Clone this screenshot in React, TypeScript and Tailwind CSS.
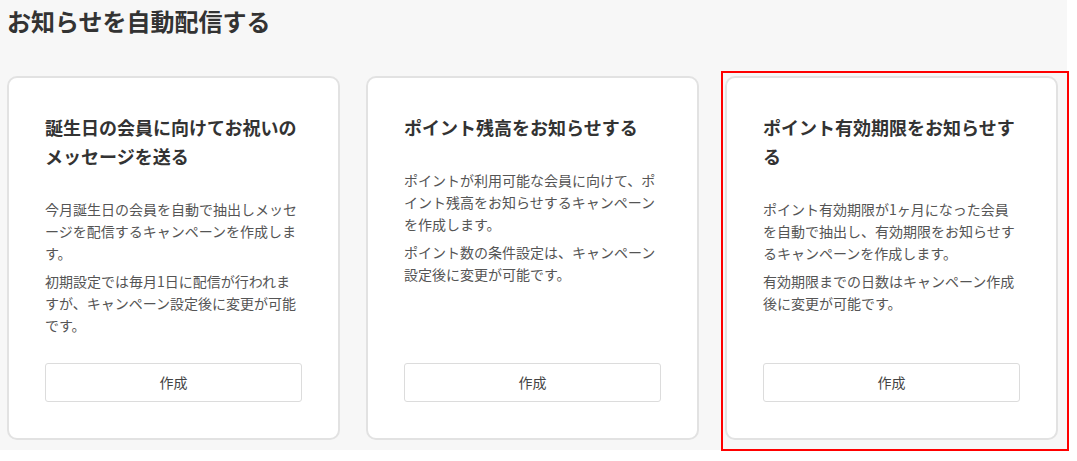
import React from 'react';

interface Campaign {
  title: string;
  paragraphs: string[];
  highlighted?: boolean;
}

const campaigns: Campaign[] = [
  {
    title: '誕生日の会員に向けてお祝いのメッセージを送る',
    paragraphs: [
      '今月誕生日の会員を自動で抽出しメッセージを配信するキャンペーンを作成します。',
      '初期設定では毎月1日に配信が行われますが、キャンペーン設定後に変更が可能です。',
    ],
  },
  {
    title: 'ポイント残高をお知らせする',
    paragraphs: [
      'ポイントが利用可能な会員に向けて、ポイント残高をお知らせするキャンペーンを作成します。',
      'ポイント数の条件設定は、キャンペーン設定後に変更が可能です。',
    ],
  },
  {
    title: 'ポイント有効期限をお知らせする',
    paragraphs: [
      'ポイント有効期限が1ヶ月になった会員を自動で抽出し、有効期限をお知らせするキャンペーンを作成します。',
      '有効期限までの日数はキャンペーン作成後に変更が可能です。',
    ],
    highlighted: true,
  },
];

const CampaignCard: React.FC<{ campaign: Campaign }> = ({ campaign }) => (
  <div className="relative w-[333px] shrink-0">
    {campaign.highlighted && (
      // annotation frame drawn over the card
      <div className="pointer-events-none absolute -left-[4px] -top-[5px] -right-[11px] -bottom-[11px] border-2 border-[#ff0000]" />
    )}
    <div className="flex h-[364px] flex-col rounded-[10px] border-2 border-[#e2e2e2] bg-white px-[36px] pt-[35px] pb-[36px]">
      <h2 className="text-[18px] font-bold leading-[29px] text-[#333]">{campaign.title}</h2>
      <div className="mt-[27px] text-[14px] leading-[22px] text-[#555]">
        {campaign.paragraphs.map((p) => (
          <p key={p} className="mb-[6px]">
            {p}
          </p>
        ))}
      </div>
      <button
        type="button"
        className="mt-auto h-[39px] w-full rounded-[3px] border border-[#dcdcdc] bg-white text-[14px] text-[#444]"
      >
        作成
      </button>
    </div>
  </div>
);

export default function App() {
  return (
    <div
      className="min-h-[461px] bg-white"
      style={{ fontFamily: '"Noto Sans CJK JP", "Noto Sans", sans-serif' }}
    >
      <div className="h-[450px] w-[1067px] bg-[#f7f7f7] px-[7px] pt-[5px]">
        <h1 className="text-[24px] font-bold leading-[32px] text-[#333]">お知らせを自動配信する</h1>
        <div className="mt-[39px] flex gap-[26px]">
          {campaigns.map((c) => (
            <CampaignCard key={c.title} campaign={c} />
          ))}
        </div>
      </div>
    </div>
  );
}
